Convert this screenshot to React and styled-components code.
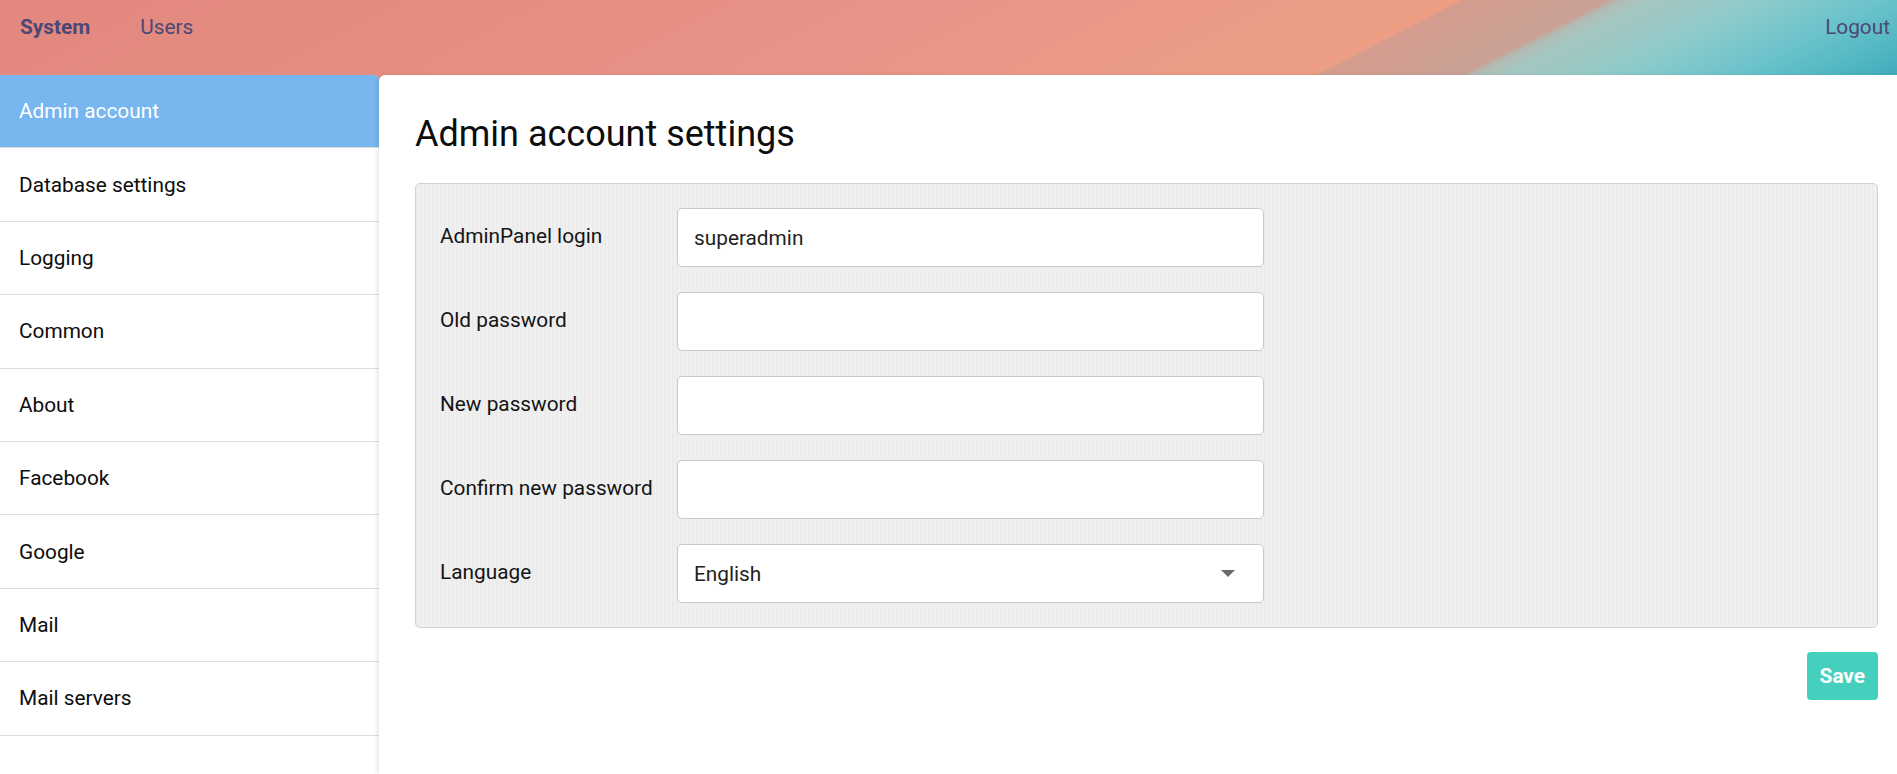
import React from 'react';
import styled, { createGlobalStyle } from 'styled-components';

const GlobalStyle = createGlobalStyle`
  html, body { margin: 0; padding: 0; }
  body {
    font-family: Roboto, "Liberation Sans", Arial, sans-serif;
    background: #ffffff;
  }
  *, *::before, *::after { box-sizing: border-box; }
`;

const headerArt = `linear-gradient(153deg,
  #e2877f 0px,
  #e58d80 220px,
  #e8948a 420px,
  #eb9c86 580px,
  #ed9f85 662px,
  #d59c8e 666px,
  #c9a296 730px,
  #b2bcb4 736px,
  #a6c6c0 748px,
  #8ecbca 800px,
  #6ec4cc 850px,
  #50b6c3 900px,
  #3aa6b6 941px)`;

const Shell = styled.div`
  min-height: 100vh;
  display: flex;
  flex-direction: column;
  background: ${headerArt} top left / 100% 90px no-repeat, #ffffff;
`;

const Header = styled.header`
  height: 75px;
  flex-shrink: 0;
  display: flex;
  align-items: flex-start;
  padding: 15px 7px 0 20px;
`;

const Nav = styled.nav`
  display: flex;
  gap: 50px;
`;

const NavLink = styled.a`
  font-size: 20.8px;
  line-height: normal;
  color: #4b4876;
  font-weight: ${(p) => (p.$active ? 700 : 400)};
  text-decoration: none;
  cursor: pointer;
`;

const LogoutLink = styled(NavLink)`
  margin-left: auto;
`;

const Body = styled.div`
  flex: 1;
  display: flex;
`;

const Sidebar = styled.aside`
  width: 379px;
  flex-shrink: 0;
  background: #ffffff;
  border-top-right-radius: 5px;
  overflow: hidden;
  display: flex;
  flex-direction: column;
`;

const SideItem = styled.a`
  height: 73.4px;
  display: flex;
  align-items: center;
  padding-left: 19px;
  font-size: 20.8px;
  color: ${(p) => (p.$active ? '#ffffff' : '#0d0d0d')};
  background: ${(p) => (p.$active ? '#77b6ee' : '#ffffff')};
  border-bottom: 1px solid #dddddd;
  text-decoration: none;
  cursor: pointer;
`;

const Main = styled.main`
  flex: 1;
  position: relative;
  z-index: 1;
  background: #ffffff;
  border-top-left-radius: 6px;
  box-shadow: -2px 0 4px rgba(0, 0, 0, 0.09);
  padding: 38px 19px 0 36px;
`;

const Title = styled.h1`
  margin: 0 0 28px;
  font-size: 36px;
  font-weight: 400;
  line-height: normal;
  color: #0d0d0d;
`;

const FormPanel = styled.section`
  border: 1px solid #d2d2d2;
  border-radius: 5px;
  background: repeating-linear-gradient(90deg, #ececec 0 2px, #f0f0f0 2px 4px);
  padding: 24px;
  display: grid;
  grid-template-columns: 237px 587px;
  row-gap: 25px;
`;

const Label = styled.label`
  align-self: center;
  padding-bottom: 3px;
  font-size: 20.8px;
  color: #141414;
`;

const TextInput = styled.input`
  height: 59px;
  width: 100%;
  border: 1px solid #c9c9c9;
  border-radius: 5px;
  background: #ffffff;
  padding: 0 16px;
  font-family: Roboto, "Liberation Sans", Arial, sans-serif;
  font-size: 20.8px;
  color: #222222;
  outline: none;
`;

const SelectWrap = styled.div`
  position: relative;
`;

const Select = styled.select`
  appearance: none;
  -webkit-appearance: none;
  height: 59px;
  width: 100%;
  border: 1px solid #c9c9c9;
  border-radius: 5px;
  background: #ffffff;
  padding: 0 16px;
  font-family: Roboto, "Liberation Sans", Arial, sans-serif;
  font-size: 20.8px;
  color: #222222;
  outline: none;
`;

const Caret = styled.svg`
  position: absolute;
  right: 29px;
  top: 26px;
  width: 14px;
  height: 7px;
  pointer-events: none;
`;

const Actions = styled.div`
  display: flex;
  justify-content: flex-end;
  margin-top: 24px;
`;

const SaveButton = styled.button`
  height: 48px;
  padding: 0 13px;
  border: none;
  border-radius: 4px;
  background: #45d0bd;
  color: #ffffff;
  font-family: Roboto, "Liberation Sans", Arial, sans-serif;
  font-size: 20.8px;
  font-weight: 700;
  cursor: pointer;
`;

const menu = [
  'Admin account',
  'Database settings',
  'Logging',
  'Common',
  'About',
  'Facebook',
  'Google',
  'Mail',
  'Mail servers',
];

const fields = [
  { label: 'AdminPanel login', value: 'superadmin', type: 'text' },
  { label: 'Old password', value: '', type: 'password' },
  { label: 'New password', value: '', type: 'password' },
  { label: 'Confirm new password', value: '', type: 'password' },
];

export default function App() {
  return (
    <>
      <GlobalStyle />
      <Shell>
        <Header>
          <Nav>
            <NavLink $active>System</NavLink>
            <NavLink>Users</NavLink>
          </Nav>
          <LogoutLink>Logout</LogoutLink>
        </Header>
        <Body>
          <Sidebar>
            {menu.map((m, i) => (
              <SideItem key={m} $active={i === 0}>
                {m}
              </SideItem>
            ))}
          </Sidebar>
          <Main>
            <Title>Admin account settings</Title>
            <FormPanel>
              {fields.map((f) => (
                <React.Fragment key={f.label}>
                  <Label>{f.label}</Label>
                  <TextInput type={f.type} defaultValue={f.value} />
                </React.Fragment>
              ))}
              <Label>Language</Label>
              <SelectWrap>
                <Select defaultValue="en">
                  <option value="en">English</option>
                </Select>
                <Caret viewBox="0 0 14 7">
                  <path d="M0 0 H14 L7 7 Z" fill="#6b6b6b" />
                </Caret>
              </SelectWrap>
            </FormPanel>
            <Actions>
              <SaveButton>Save</SaveButton>
            </Actions>
          </Main>
        </Body>
      </Shell>
    </>
  );
}
